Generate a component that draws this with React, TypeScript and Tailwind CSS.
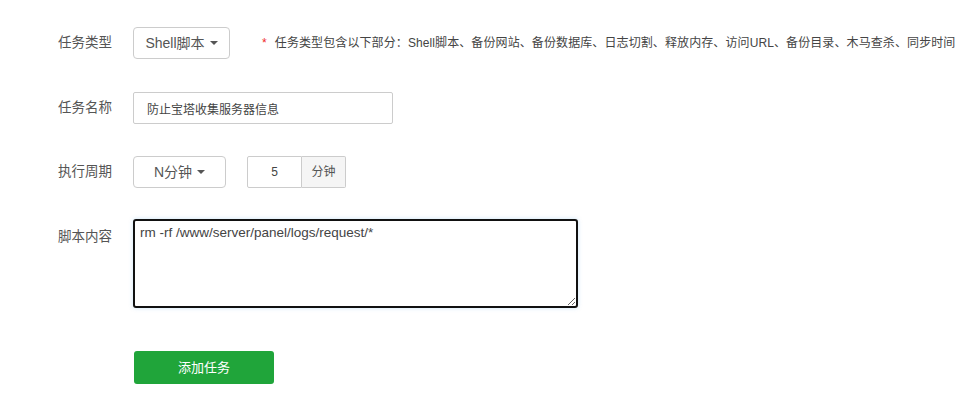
import React from 'react';

const font = { fontFamily: '"Liberation Sans", "Noto Sans CJK SC", sans-serif' };

const Caret = () => (
  <span className="ml-[5px] inline-block h-0 w-0 border-x-[4px] border-t-[4px] border-x-transparent border-t-[#555] align-middle" />
);

const Label = ({ children, top = false }: { children: React.ReactNode; top?: boolean }) => (
  <div className={`w-[75px] shrink-0 text-[13.5px] text-[#555] ${top ? 'pt-[8px]' : ''}`}>{children}</div>
);

const CronForm = () => {
  return (
    <div className="min-h-[404px] w-full bg-white pl-[58px] pt-[27px]" style={font}>
      {/* 任务类型 */}
      <div className="flex h-[32px] items-center">
        <Label>任务类型</Label>
        <button className="flex h-[32px] w-[97px] items-center justify-center rounded-[4px] border border-[#ccc] bg-white text-[14px] text-[#555]">
          Shell脚本
          <Caret />
        </button>
        <div className="ml-[32px] flex items-center text-[12px] tracking-[0.1px] text-[#444]">
          <span className="mr-[8px] text-[#ef2a2a]">*</span>
          任务类型包含以下部分：Shell脚本、备份网站、备份数据库、日志切割、释放内存、访问URL、备份目录、木马查杀、同步时间
        </div>
      </div>

      {/* 任务名称 */}
      <div className="mt-[33px] flex h-[32px] items-center">
        <Label>任务名称</Label>
        <input
          defaultValue="防止宝塔收集服务器信息"
          className="h-[32px] w-[260px] rounded-[2px] border border-[#ccc] px-[13px] text-[12px] text-[#444] outline-none"
        />
      </div>

      {/* 执行周期 */}
      <div className="mt-[32px] flex h-[32px] items-center">
        <Label>执行周期</Label>
        <button className="flex h-[32px] w-[93px] items-center justify-center rounded-[4px] border border-[#ccc] bg-white text-[14px] text-[#555]">
          N分钟
          <Caret />
        </button>
        <div className="ml-[21px] flex h-[32px]">
          <input
            defaultValue="5"
            className="h-full w-[55px] rounded-l-[2px] border border-[#ccc] text-center text-[12px] text-[#444] outline-none"
          />
          <span className="flex h-full w-[44px] items-center justify-center rounded-r-[2px] border border-l-0 border-[#ccc] bg-[#f5f5f5] text-[12px] text-[#555]">
            分钟
          </span>
        </div>
      </div>

      {/* 脚本内容 */}
      <div className="mt-[31px] flex">
        <Label top>脚本内容</Label>
        <textarea
          defaultValue="rm -rf /www/server/panel/logs/request/*"
          className="h-[89px] w-[445px] resize rounded-[3px] border-2 border-[#111] px-[5px] py-[2px] text-[13.5px] leading-[20px] text-[#444] shadow-[0_0_4px_rgba(102,175,233,0.35)] outline-none"
        />
      </div>

      {/* 添加任务 */}
      <div className="mt-[43px] pl-[76px]">
        <button className="h-[33px] w-[140px] rounded-[3px] bg-[#20a53a] text-[13px] text-white">添加任务</button>
      </div>
    </div>
  );
};

export default function App() {
  return <CronForm />;
}
